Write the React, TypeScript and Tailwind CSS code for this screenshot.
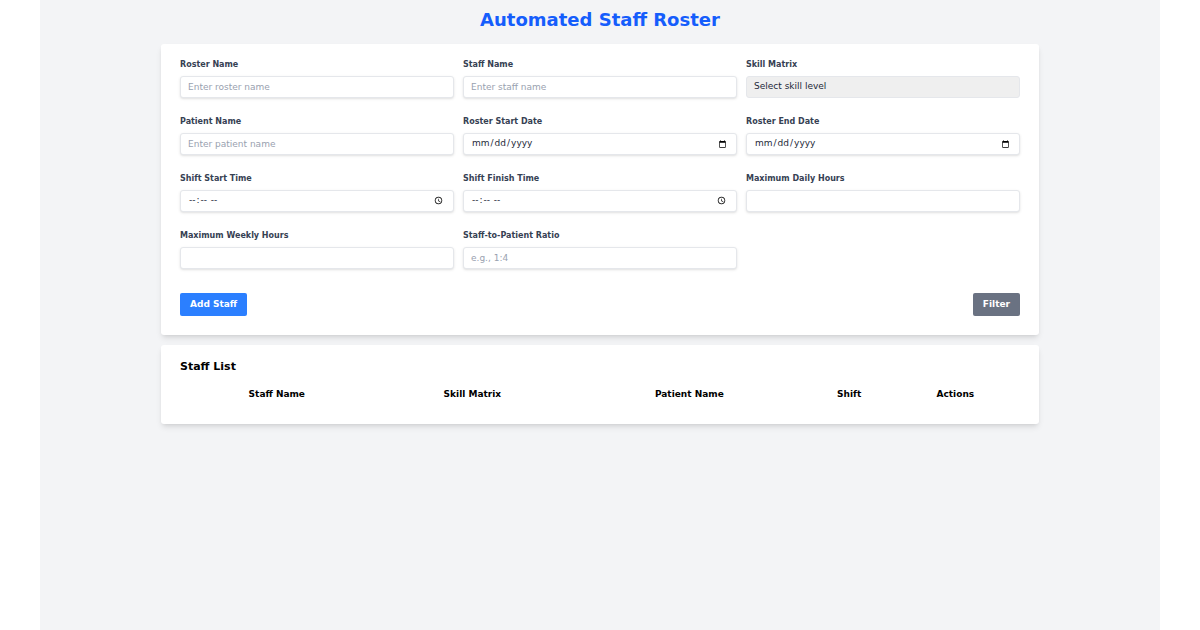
const font = { fontFamily: '"DejaVu Sans", sans-serif' };

const inputCls =
  "w-full h-[22px] rounded-[3px] border border-gray-200 shadow-sm px-[7px] text-[9px] text-gray-800 placeholder:text-gray-400 bg-white outline-none";

function Field({ label, children }: { label: string; children: React.ReactNode }) {
  return (
    <div className="flex flex-col">
      <label className="text-[8px] font-bold text-gray-700 mb-[6px] leading-[11px]">{label}</label>
      {children}
    </div>
  );
}

export default function App() {
  return (
    <div className="w-[1200px] h-[630px] bg-white" style={font}>
      <div className="mx-auto w-[1120px] h-full bg-gray-100 pt-[8px]">
        <h1 className="text-center text-[18px] font-bold text-blue-600 leading-[24px]">Automated Staff Roster</h1>
        <div className="mx-auto mt-[12px] w-[878px] bg-white rounded-[3px] shadow-md px-[19px] pt-[15px] pb-[19px]">
          <div className="grid grid-cols-3 gap-x-[9px] gap-y-[18px]">
            <Field label="Roster Name">
              <input className={inputCls} placeholder="Enter roster name" />
            </Field>
            <Field label="Staff Name">
              <input className={inputCls} placeholder="Enter staff name" />
            </Field>
            <Field label="Skill Matrix">
              <div className="w-full h-[22px] rounded-[3px] bg-[#efefef] border border-gray-200 px-[7px] text-[9px] text-gray-800 flex items-center">
                Select skill level
              </div>
            </Field>
            <Field label="Patient Name">
              <input className={inputCls} placeholder="Enter patient name" />
            </Field>
            <Field label="Roster Start Date">
              <input type="date" className={inputCls} />
            </Field>
            <Field label="Roster End Date">
              <input type="date" className={inputCls} />
            </Field>
            <Field label="Shift Start Time">
              <input type="time" className={inputCls} />
            </Field>
            <Field label="Shift Finish Time">
              <input type="time" className={inputCls} />
            </Field>
            <Field label="Maximum Daily Hours">
              <input className={inputCls} />
            </Field>
            <Field label="Maximum Weekly Hours">
              <input className={inputCls} />
            </Field>
            <Field label="Staff-to-Patient Ratio">
              <input className={inputCls} placeholder="e.g., 1:4" />
            </Field>
          </div>
          <div className="flex justify-between mt-[24px]">
            <button className="h-[23px] px-[10px] rounded-[2px] bg-blue-500 text-white text-[9px] font-bold">Add Staff</button>
            <button className="h-[23px] px-[10px] rounded-[2px] bg-gray-500 text-white text-[9px] font-bold">Filter</button>
          </div>
        </div>
        <div className="mx-auto mt-[10px] w-[878px] bg-white rounded-[3px] shadow-md px-[19px] pt-[15px] pb-[22px]">
          <h2 className="text-[11px] font-bold text-black leading-[14px]">Staff List</h2>
          <table className="w-full mt-[14px]">
            <thead>
              <tr className="text-[9px] font-bold text-black">
                <th className="font-bold">Staff Name</th>
                <th className="font-bold">Skill Matrix</th>
                <th className="font-bold">Patient Name</th>
                <th className="font-bold">Shift</th>
                <th className="font-bold">Actions</th>
              </tr>
            </thead>
          </table>
        </div>
      </div>
    </div>
  );
}
